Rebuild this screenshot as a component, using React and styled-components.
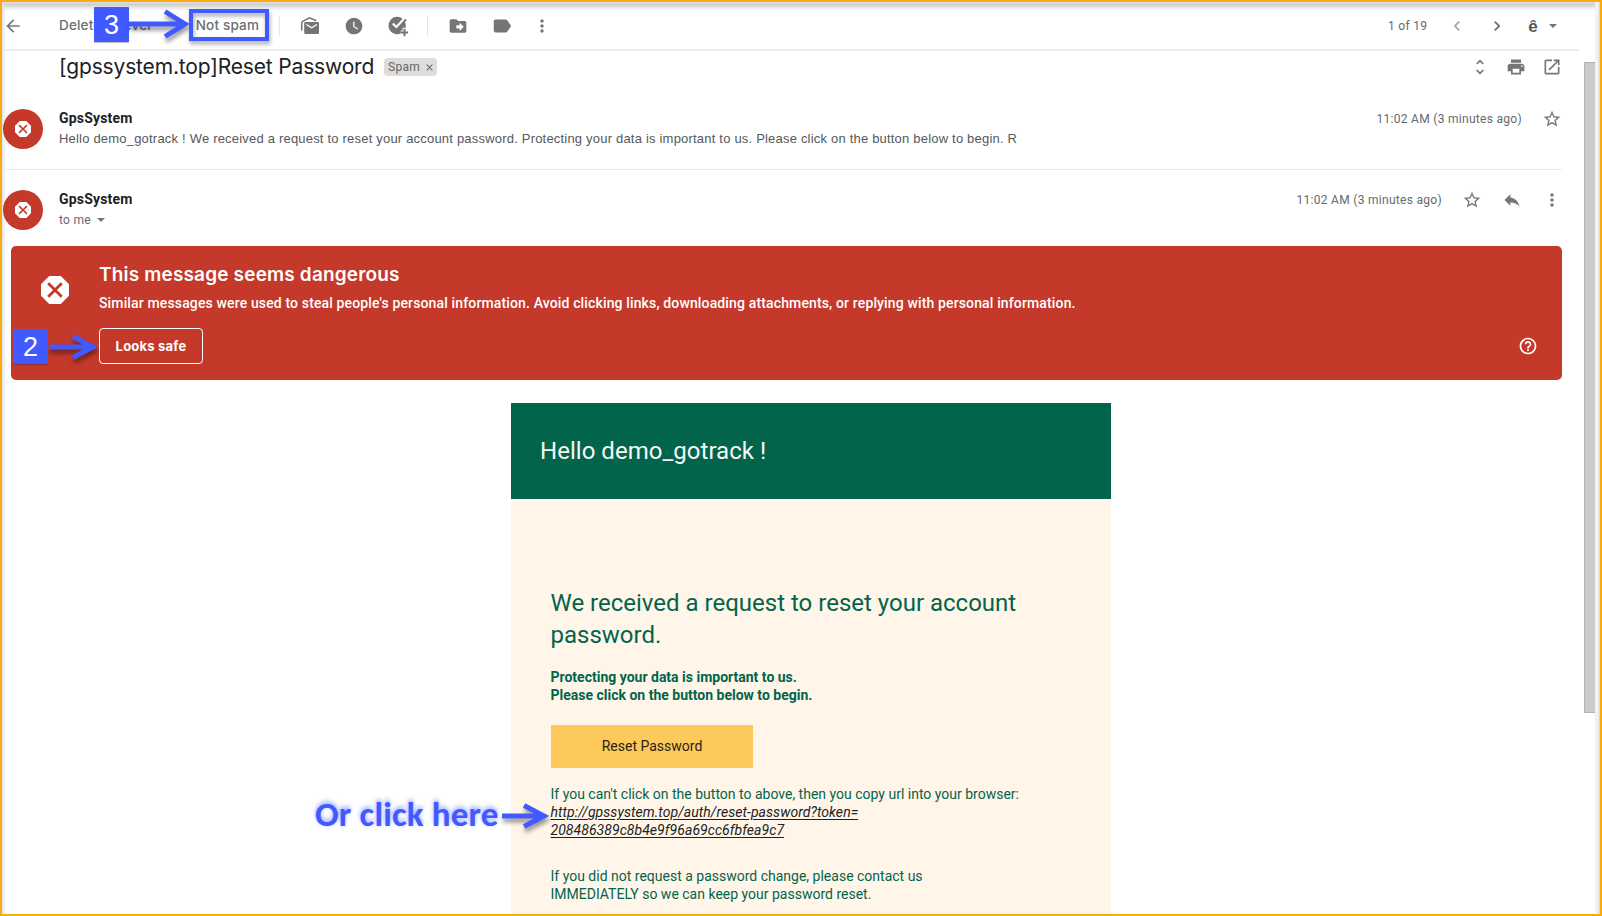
import React from "react";
import styled, { createGlobalStyle } from "styled-components";

const GlobalStyle = createGlobalStyle`
  * { box-sizing: border-box; }
  body { margin: 0; background: #fff; font-family: Roboto, "Liberation Sans", sans-serif; }
`;

const display = `Inter, "Open Sans", sans-serif`;
const blue = "#415aff";

const Page = styled.div`
  position: relative;
  width: 1602px;
  height: 916px;
  overflow: hidden;
  border: 2px solid #faaa0a;
  background: #fff;
  display: flex;
`;

const Main = styled.main`
  position: relative;
  flex: 1;
  min-width: 0;
  display: flex;
  flex-direction: column;
`;

const TopShade = styled.div`
  position: absolute;
  inset: 0 0 auto 0;
  height: 9px;
  background: linear-gradient(#dedede, #cfcfcf 30%, #e6e6e6 60%, rgba(255, 255, 255, 0));
`;

const LeftShade = styled.div`
  position: absolute;
  inset: 0 auto 0 0;
  width: 4px;
  background: linear-gradient(to right, #e2e2e2, rgba(255, 255, 255, 0));
`;

const Toolbar = styled.header`
  display: flex;
  align-items: center;
  width: 1577px;
  height: 49px;
  padding: 0 22px 0 0;
  border-bottom: 2px solid #ebebeb;
  color: #757575;
`;

const Icon = styled.svg`
  display: block;
  flex: none;
  width: ${(p) => p.$s || 20}px;
  height: ${(p) => p.$s || 20}px;
  margin-left: ${(p) => p.$ml || 0}px;
  fill: ${(p) => p.$fill || "currentColor"};
`;

const ToolText = styled.span`
  margin-left: ${(p) => p.$ml}px;
  padding-bottom: 1px;
  font: 500 13.5px/20px ${display};
  letter-spacing: 0.18px;
  color: #6b6e72;
  white-space: nowrap;
`;

const Separator = styled.span`
  width: 1px;
  height: 20px;
  margin-left: ${(p) => p.$ml}px;
  background: #e3e3e3;
`;

const Pager = styled.div`
  display: flex;
  align-items: center;
  margin-left: auto;
  font-size: 12px;
  letter-spacing: 0.3px;
  color: #666a6e;
`;

const InputTool = styled.span`
  margin-left: 21px;
  padding-top: 2px;
  font: 700 17px/20px "Liberation Sans", Arial, sans-serif;
  color: #555;
`;

const Subject = styled.div`
  display: flex;
  align-items: center;
  width: 1560px;
  height: 34px;
  padding: 0 0 2px 57px;
  color: #757575;
`;

const SubjectTitle = styled.h1`
  margin: 0;
  font: 400 21px/28px ${display};
  letter-spacing: -0.16px;
  color: #202124;
  white-space: nowrap;
`;

const Chip = styled.span`
  display: flex;
  align-items: center;
  justify-content: space-between;
  width: 53px;
  height: 18px;
  margin-left: auto;
  padding: 0 2px 0 4px;
  border-radius: 4px;
  background: #dddddd;
  color: #666;
  font-size: 12px;
  letter-spacing: 0.3px;
`;

const TitleGroup = styled.div`
  display: flex;
  align-items: center;
  width: 378px;
`;

const IconGroup = styled.div`
  display: flex;
  align-items: center;
  margin-left: auto;
`;

const Message = styled.article`
  display: flex;
  align-items: flex-start;
  width: 1560px;
  height: ${(p) => p.$h}px;
  padding: ${(p) => p.$pt}px 0 0 1px;
  border-bottom: ${(p) => (p.$line ? "1px solid #ececec" : "0")};
  color: #757575;
`;

const Avatar = styled.div`
  display: grid;
  place-items: center;
  width: 40px;
  height: 40px;
  border-radius: 50%;
  background: #c5392a;
  color: #fff;
`;

const Sender = styled.div`
  margin-left: 16px;
  flex: 1;
`;

const SenderName = styled.div`
  margin: -1px 0 1px;
  font: 700 14px/20px Roboto, sans-serif;
  letter-spacing: 0.18px;
  color: #202124;
`;

const Snippet = styled.div`
  font: 400 13px/20px "Liberation Sans", Arial, sans-serif;
  letter-spacing: 0.2px;
  color: #55585c;
  white-space: nowrap;
`;

const Recipient = styled.div`
  display: flex;
  align-items: center;
  font: 400 12px/20px Roboto, sans-serif;
  letter-spacing: 0.3px;
  color: #666a6e;
`;

const Caret = styled.span`
  margin-left: ${(p) => p.$ml}px;
  border: 4px solid transparent;
  border-top-color: #757575;
  border-bottom: 0;
`;

const Meta = styled.div`
  display: flex;
  align-items: center;
  height: 20px;
`;

const Time = styled.span`
  font: 400 12px/20px Roboto, sans-serif;
  letter-spacing: 0.3px;
  color: #666a6e;
`;

const Banner = styled.section`
  display: flex;
  width: 1551px;
  height: 134px;
  margin-left: 9px;
  padding: 19px 24px 15px 30px;
  border-radius: 5px;
  background: #c5392a;
  color: #fff;
`;

const BannerIcon = styled(Icon)`
  margin-top: 11px;
`;

const BannerBody = styled.div`
  flex: 1;
  margin-left: 30px;
`;

const BannerTitle = styled.h2`
  margin: 0;
  font: 600 19px/20px ${display};
  letter-spacing: 0.17px;
`;

const BannerText = styled.p`
  margin: 8px 0 15px;
  font: 500 14px/20px Roboto, sans-serif;
  letter-spacing: 0.14px;
`;

const SafeButton = styled.button`
  display: block;
  width: 104px;
  height: 36px;
  padding: 0;
  border: 1px solid #fff;
  border-radius: 4px;
  background: transparent;
  color: #fff;
  font: 700 13px/20px ${display};
  letter-spacing: 0.22px;
`;

const HelpSlot = styled.div`
  align-self: flex-end;
  margin-bottom: 9px;
`;

const Mail = styled.section`
  width: 600px;
  height: 511px;
  margin: 23px 0 0 509px;
  background: #fff6e9;
  color: #02644b;
`;

const MailHeader = styled.header`
  height: 96px;
  padding: 0 29px;
  background: #02644b;
  color: #f3f7f5;
  font: 400 24px/96px Roboto, sans-serif;
  letter-spacing: 0.03px;
`;

const MailBody = styled.div`
  padding: 88px 40px 0 39.5px;
  font-size: 14px;
  line-height: 18px;
`;

const MailTitle = styled.h3`
  margin: 0 0 17px;
  font: 400 24px/32px Roboto, sans-serif;
`;

const Line = styled.span`
  display: block;
  white-space: nowrap;
`;

const Lead = styled.div`
  font-weight: 700;
`;

const ResetButton = styled.button`
  display: block;
  width: 202px;
  height: 43px;
  margin: 21px 0 17px 0.5px;
  padding: 0 0 2px;
  border: 0;
  background: #fdc95b;
  color: #2b2413;
  font: 400 14px/20px Roboto, sans-serif;
`;

const MailLink = styled.a`
  display: block;
  margin-bottom: 28px;
  color: #222;
  font-style: italic;
  letter-spacing: 0.055px;
  text-decoration: underline;
  text-underline-offset: 2px;
`;

const ScrollColumn = styled.aside`
  position: relative;
  width: 16px;
  padding-top: 60px;
  background: linear-gradient(to right, transparent 11px, #ededed 11px, #f8f8f8 13px, #d4d4d4);
`;

const ScrollThumb = styled.div`
  width: 11px;
  height: 651px;
  border: 1px solid #b2b2b2;
  border-right: 0;
  background: #cbcbcb;
`;

const StepBadge = styled.div`
  position: absolute;
  left: ${(p) => p.$x}px;
  top: ${(p) => p.$y}px;
  width: 35px;
  height: 35px;
  border-radius: 1px;
  background: ${blue};
  color: #fff;
  text-align: center;
  font: 400 27px/36px "Liberation Sans", Arial, sans-serif;
  box-shadow: 0 1px 1px rgba(40, 40, 90, 0.35);
`;

const ArrowSvg = styled.svg`
  position: absolute;
  left: ${(p) => p.$x}px;
  top: ${(p) => p.$y}px;
  overflow: visible;
  fill: none;
  stroke: ${blue};
  stroke-width: 5px;
  filter: drop-shadow(1px 4px 2px rgba(0, 0, 0, 0.4));
`;

const Highlight = styled.div`
  position: absolute;
  left: 187px;
  top: 7px;
  width: 80px;
  height: 32px;
  border: 4px solid ${blue};
  filter: drop-shadow(1px 3px 2px rgba(0, 0, 0, 0.35));
`;

const Callout = styled.div`
  position: absolute;
  left: 313px;
  top: 792px;
  font: 700 35px/40px Carlito, Lato, sans-serif;
  letter-spacing: 0.18px;
  color: ${blue};
  white-space: nowrap;
  text-shadow: 0 -3px 4px rgba(65, 90, 255, 0.4), 0 0 3px rgba(65, 90, 255, 0.25);
`;

function Arrow({ x, y, length, head = 12 }) {
  return (
    <ArrowSvg $x={x} $y={y - 12} width={length} height={24}>
      <path d={`M0 12H${length - 7}M${length - 26} ${12 - head + 1.5}L${length - 6} 12L${length - 26} ${12 + head - 1.5}`} />
    </ArrowSvg>
  );
}

function Glyph({ d, s, ml, fill, box = "0 0 24 24", children }) {
  return (
    <Icon viewBox={box} $s={s} $ml={ml} $fill={fill}>
      {d && <path d={d} />}
      {children}
    </Icon>
  );
}

const paths = {
  back: "M20 11H7.83l5.59-5.59L12 4l-8 8 8 8 1.41-1.41L7.83 13H20v-2z",
  clock: "M12 2C6.5 2 2 6.5 2 12s4.5 10 10 10 10-4.5 10-10S17.500 2 12 2zm4.200 14.200L11 13V7h1.500v5.200l4.500 2.700-.8 1.300z",
  move: "M20 6h-8l-2-2H4c-1.100 0-2 .9-2 2v12c0 1.100.9 2 2 2h16c1.100 0 2-.9 2-2V8c0-1.100-.9-2-2-2zm-6 12v-3h-4v-4h4V8l5 5-5 5z",
  label: "M17.630 5.840C17.270 5.330 16.670 5 16 5L5 5.010C3.900 5.010 3 5.900 3 7v10c0 1.100.9 1.990 2 1.990L16 19c.67 0 1.270-.33 1.630-.84L22 12l-4.370-6.160z",
  more: "M12 8c1.100 0 2-.9 2-2s-.9-2-2-2-2 .9-2 2 .9 2 2 2zm0 2c-1.100 0-2 .9-2 2s.9 2 2 2 2-.9 2-2-.9-2-2-2zm0 6c-1.100 0-2 .9-2 2s.9 2 2 2 2-.9 2-2-.9-2-2-2z",
  left: "M15.410 7.410L14 6l-6 6 6 6 1.410-1.410L10.830 12z",
  right: "M10 6L8.590 7.410 13.170 12l-4.580 4.590L10 18l6-6z",
  unfold: "M12 5.830L15.170 9l1.410-1.410L12 3 7.410 7.590 8.830 9 12 5.830zm0 12.340L8.830 15l-1.410 1.410L12 21l4.590-4.590L15.170 15 12 18.170z",
  print: "M19 8H5c-1.660 0-3 1.340-3 3v6h4v4h12v-4h4v-6c0-1.660-1.340-3-3-3zm-3 11H8v-5h8v5zm3-7c-.55 0-1-.45-1-1s.45-1 1-1 1 .45 1 1-.45 1-1 1zm-1-9H6v4h12V3z",
  open: "M19 19H5V5h7V3H5c-1.110 0-2 .9-2 2v14c0 1.100.89 2 2 2h14c1.100 0 2-.9 2-2v-7h-2v7zM14 3v2h3.590l-9.830 9.830 1.410 1.410L19 6.410V10h2V3h-7z",
  star: "M22 9.240l-7.190-.62L12 2 9.190 8.630 2 9.240l5.460 4.730L5.820 21 12 17.270 18.180 21l-1.630-7.030L22 9.240zM12 15.400l-3.760 2.270 1-4.280-3.320-2.880 4.380-.38L12 6.100l1.710 4.040 4.380.38-3.320 2.880 1 4.280L12 15.400z",
  reply: "M10 9V5l-7 7 7 7v-4.100c5 0 8.500 1.600 11 5.100-1-5-4-10-11-11z",
  octagon: "M15.730 3H8.270L3 8.270v7.460L8.270 21h7.460L21 15.730V8.270L15.730 3zM17 15.740L15.740 17 12 13.260 8.260 17 7 15.740 10.740 12 7 8.260 8.260 7 12 10.740 15.740 7 17 8.260 13.260 12 17 15.740z",
  help: "M11 18h2v-2h-2v2zm1-16C6.480 2 2 6.480 2 12s4.480 10 10 10 10-4.480 10-10S17.520 2 12 2zm0 18c-4.410 0-8-3.590-8-8s3.590-8 8-8 8 3.590 8 8-3.590 8-8 8zm0-14c-2.210 0-4 1.790-4 4h2c0-1.100.9-2 2-2s2 .9 2 2c0 2-3 1.750-3 5h2c0-2.250 3-2.500 3-5 0-2.210-1.790-4-4-4z",
  close: "M19 6.410L17.590 5 12 10.590 6.410 5 5 6.410 10.590 12 5 17.590 6.410 19 12 13.410 17.590 19 19 17.590 13.410 12z",
};

export default function App() {
  return (
    <Page>
      <GlobalStyle />
      <TopShade />
      <LeftShade />
      <Main>
        <Toolbar>
          <Glyph d={paths.back} s={20} ml={1} />
          <ToolText $ml={36}>Delete forever</ToolText>
          <ToolText $ml={43}>Not spam</ToolText>
          <Separator $ml={20} />
          <Glyph box="0 0 20 20" s={20} ml={20}>
            <path d="M1.700 14.500V7c0-1 .3-1.300 1-1.700L9.500 1.800l6.800 3" fill="none" stroke="currentColor" strokeWidth="1.500" />
            <path fillRule="evenodd" d="M5.500 6h12.300c.8 0 1.200.5 1.200 1.200v9.600c0 .8-.5 1.200-1.200 1.200H5.500c-.8 0-1.300-.5-1.300-1.200V7.200C4.200 6.500 4.700 6 5.500 6zm.8 1.700v1.600l5.400 3.200 5.300-3.200V7.700l-5.300 3.200z" />
          </Glyph>
          <Glyph d={paths.clock} s={20} ml={24} />
          <Glyph s={22} ml={23}>
            <path fillRule="evenodd" d="M11 2a9.500 9.500 0 0 1 6 2l-6.800 7.500-3-3L5.500 10l4.700 4.700L20 4l1.600 1.500-2 2.200c.6 1.200.9 2.500.9 4V14H17v3h-2v3.200A9.500 9.500 0 1 1 11 2z" />
            <path d="M18 15h2.200v3H23v2.200h-2.800v3H18v-3h-3V18h3z" />
          </Glyph>
          <Separator $ml={18} />
          <Glyph d={paths.move} s={20} ml={20} />
          <Glyph d={paths.label} s={22} ml={23} />
          <Glyph d={paths.more} s={20} ml={19} />
          <Pager>
            <span>1 of 19</span>
            <Glyph d={paths.left} s={20} ml={20} fill="#a3a3a3" />
            <Glyph d={paths.right} s={20} ml={20} />
            <InputTool>ê</InputTool>
            <Caret $ml={11} />
          </Pager>
        </Toolbar>

        <Subject>
          <TitleGroup>
            <SubjectTitle>[gpssystem.top]Reset Password</SubjectTitle>
            <Chip>
              Spam
              <Glyph d={paths.close} s={11} />
            </Chip>
          </TitleGroup>
          <IconGroup>
            <Glyph d={paths.unfold} s={20} />
            <Glyph d={paths.print} s={20} ml={16} />
            <Glyph d={paths.open} s={20} ml={16} />
          </IconGroup>
        </Subject>

        <Message $h={85} $pt={24} $line>
          <Avatar><Glyph d={paths.octagon} box="3 3 18 18" s={16} /></Avatar>
          <Sender>
            <SenderName>GpsSystem</SenderName>
            <Snippet>
              Hello demo_gotrack ! We received a request to reset your account password. Protecting your data is important to us. Please click on the button below to begin. R
            </Snippet>
          </Sender>
          <Meta>
            <Time>11:02 AM (3 minutes ago)</Time>
            <Glyph d={paths.star} s={20} ml={20} />
          </Meta>
        </Message>

        <Message $h={76} $pt={20}>
          <Avatar><Glyph d={paths.octagon} box="3 3 18 18" s={16} /></Avatar>
          <Sender>
            <SenderName>GpsSystem</SenderName>
            <Recipient>to me<Caret $ml={6} /></Recipient>
          </Sender>
          <Meta>
            <Time>11:02 AM (3 minutes ago)</Time>
            <Glyph d={paths.star} s={20} ml={20} />
            <Glyph d={paths.reply} s={20} ml={20} />
            <Glyph d={paths.more} s={20} ml={20} />
          </Meta>
        </Message>

        <Banner>
          <BannerIcon viewBox="3 3 18 18" $s={28}><path d={paths.octagon} /></BannerIcon>
          <BannerBody>
            <BannerTitle>This message seems dangerous</BannerTitle>
            <BannerText>
              Similar messages were used to steal people's personal information. Avoid clicking links, downloading attachments, or replying with personal information.
            </BannerText>
            <SafeButton>Looks safe</SafeButton>
          </BannerBody>
          <HelpSlot><Glyph d={paths.help} s={20} /></HelpSlot>
        </Banner>

        <Mail>
          <MailHeader>Hello demo_gotrack !</MailHeader>
          <MailBody>
            <MailTitle>
              <Line>We received a request to reset your account</Line>
              <Line>password.</Line>
            </MailTitle>
            <Lead>
              <Line>Protecting your data is important to us.</Line>
              <Line>Please click on the button below to begin.</Line>
            </Lead>
            <ResetButton>Reset Password</ResetButton>
            <Line>If you can't click on the button to above, then you copy url into your browser:</Line>
            <MailLink>
              <Line>http://gpssystem.top/auth/reset-password?token=</Line>
              <Line>208486389c8b4e9f96a69cc6fbfea9c7</Line>
            </MailLink>
            <Line>If you did not request a password change, please contact us</Line>
            <Line>IMMEDIATELY so we can keep your password reset.</Line>
          </MailBody>
        </Mail>
      </Main>

      <ScrollColumn>
        <ScrollThumb />
      </ScrollColumn>

      <StepBadge $x={92} $y={5}>3</StepBadge>
      <Arrow x={127} y={22} length={62} head={14} />
      <Highlight />
      <StepBadge $x={11} $y={327}>2</StepBadge>
      <Arrow x={47} y={344.5} length={50} />
      <Callout>Or click here</Callout>
      <Arrow x={500} y={813.5} length={48} />
    </Page>
  );
}
